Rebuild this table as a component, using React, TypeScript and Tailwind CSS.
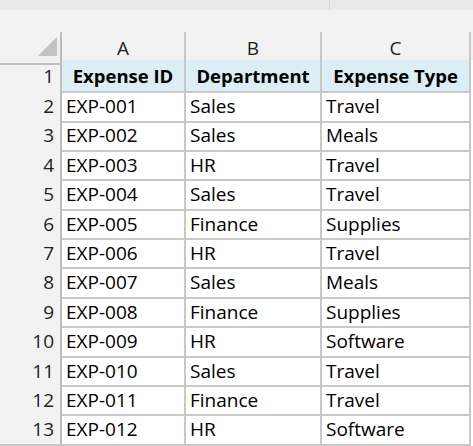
import React from 'react';

const rows = [
  ['EXP-001', 'Sales', 'Travel'],
  ['EXP-002', 'Sales', 'Meals'],
  ['EXP-003', 'HR', 'Travel'],
  ['EXP-004', 'Sales', 'Travel'],
  ['EXP-005', 'Finance', 'Supplies'],
  ['EXP-006', 'HR', 'Travel'],
  ['EXP-007', 'Sales', 'Meals'],
  ['EXP-008', 'Finance', 'Supplies'],
  ['EXP-009', 'HR', 'Software'],
  ['EXP-010', 'Sales', 'Travel'],
  ['EXP-011', 'Finance', 'Travel'],
  ['EXP-012', 'HR', 'Software'],
];

const cols = 'grid grid-cols-[62px_124px_136px_149px]';

export default function App() {
  return (
    <div
      className="w-[473px] h-[446px] bg-white overflow-hidden text-[19px] text-black"
      style={{ fontFamily: '"Open Sans", Lato, sans-serif' }}
    >
      {/* ribbon strip */}
      <div className="h-[10px] bg-[#e8e9eb] flex">
        <div className="w-[330px] border-r border-[#d6d6d6]" />
      </div>
      <div className="h-[22px] bg-[#f2f2f2]" />

      {/* column headers */}
      <div className={`${cols} h-[28px] bg-[#f2f2f2]`}>
        <div className="relative border-r-2 border-b-2 border-[#bdbdbd]">
          <svg className="absolute left-[38px] top-[5px]" width="19" height="19" viewBox="0 0 19 19">
            <polygon points="19,0 19,19 0,19" fill="#c3c3c3" />
          </svg>
        </div>
        {['A', 'B', 'C'].map((c) => (
          <div
            key={c}
            className="flex items-center justify-center pt-[2px] border-r-2 border-b-2 border-[#c8c8c8] border-b-[#bdbdbd] text-[#222]"
          >
            {c}
          </div>
        ))}
      </div>

      {/* row 1 headers */}
      <div className={`${cols} h-[30px]`}>
        <div className="flex items-center justify-end pt-[2px] pr-[6px] bg-[#f2f2f2] border-r-2 border-b-2 border-[#c8c8c8] border-r-[#bdbdbd] text-[#222]">
          1
        </div>
        {['Expense ID', 'Department', 'Expense Type'].map((h) => (
          <div
            key={h}
            className="flex items-center justify-center pt-[2px] text-[18.5px] font-bold bg-[#daeef3] border-r-2 border-b-2 border-[#c8c8c8]"
          >
            {h}
          </div>
        ))}
      </div>

      {rows.map((r, i) => (
        <div key={r[0]} className={`${cols} h-[29.4px]`}>
          <div className="flex items-center justify-end pt-[2px] pr-[6px] bg-[#f2f2f2] border-r-2 border-b-2 border-[#c8c8c8] border-r-[#bdbdbd] text-[#222]">
            {i + 2}
          </div>
          {r.map((v, j) => (
            <div
              key={j}
              className="flex items-center pt-[2px] pl-[4px] border-r-2 border-b-2 border-[#c8c8c8]"
            >
              {v}
            </div>
          ))}
        </div>
      ))}
    </div>
  );
}
